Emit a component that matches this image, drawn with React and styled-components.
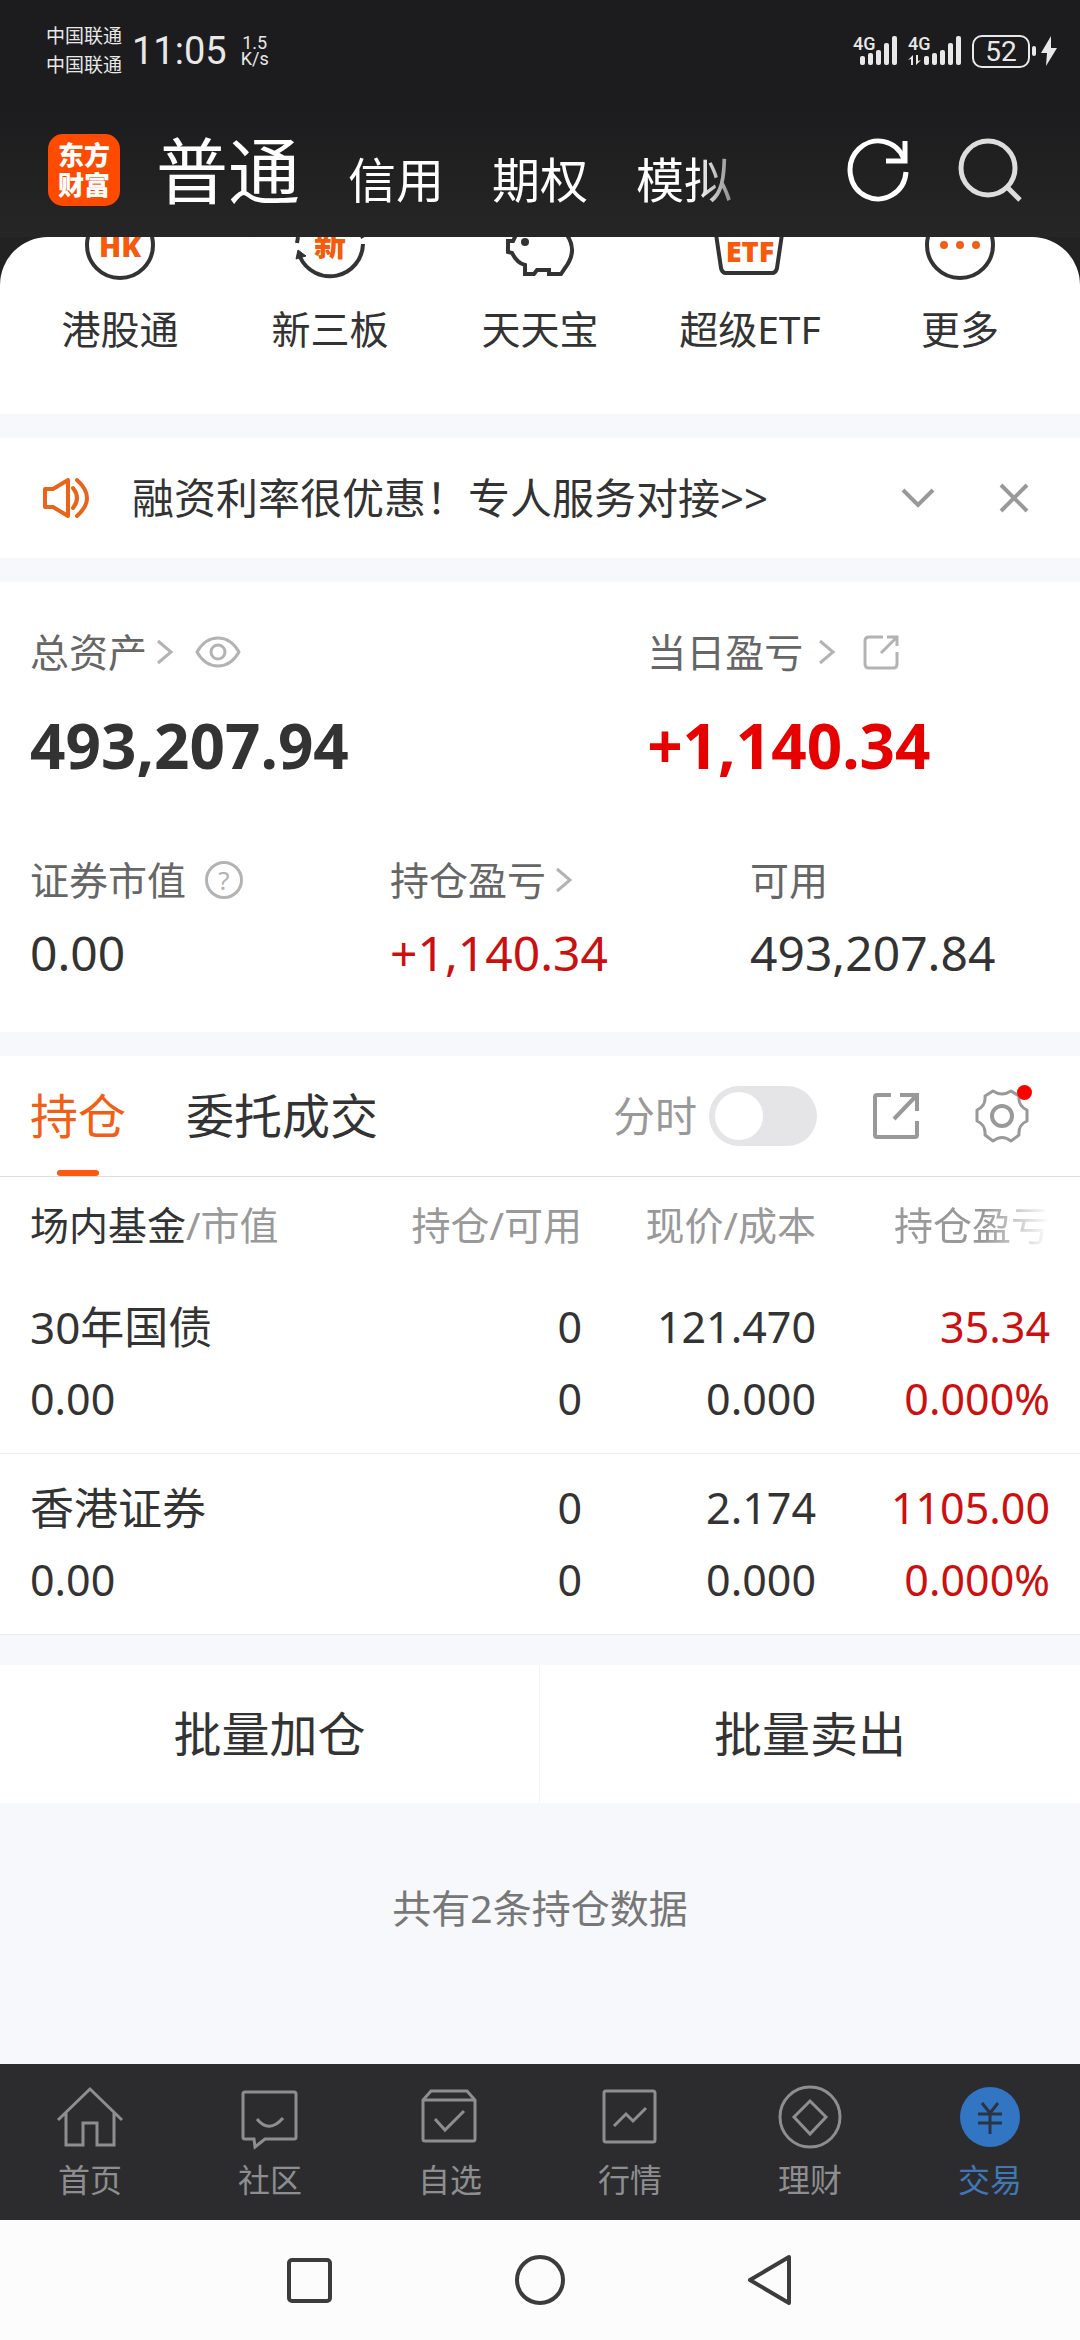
import styled, { createGlobalStyle } from 'styled-components';

const shortcuts = [
  { label: '港股通', icon: <HkIcon /> },
  { label: '新三板', icon: <NewBoardIcon /> },
  { label: '天天宝', icon: <PiggyIcon /> },
  { label: '超级ETF', icon: <EtfIcon /> },
  { label: '更多', icon: <MoreIcon /> },
];

const holdings = [
  {
    name: '30年国债',
    value: '0.00',
    amount: '0',
    available: '0',
    price: '121.470',
    cost: '0.000',
    profit: '35.34',
    rate: '0.000%',
  },
  {
    name: '香港证券',
    value: '0.00',
    amount: '0',
    available: '0',
    price: '2.174',
    cost: '0.000',
    profit: '1105.00',
    rate: '0.000%',
  },
];

const navItems = [
  { label: '首页', icon: <HomeIcon /> },
  { label: '社区', icon: <CommunityIcon /> },
  { label: '自选', icon: <WatchlistIcon /> },
  { label: '行情', icon: <QuotesIcon /> },
  { label: '理财', icon: <WealthIcon /> },
  { label: '交易', icon: <TradeIcon />, active: true },
];

export default function App() {
  return (
    <>
      <GlobalStyle />
      <Page>
        <Top>
          <StatusBar />
          <Header />
        </Top>
        <Main>
          <ShortcutsBackdrop>
            <Shortcuts>
              {shortcuts.map(({ label, icon }) => (
                <Shortcut key={label} href="#">
                  {icon}
                  {label}
                </Shortcut>
              ))}
            </Shortcuts>
          </ShortcutsBackdrop>
          <Notice />
          <Assets />
          <Positions />
          <BatchActions>
            <BatchButton type="button">批量加仓</BatchButton>
            <BatchButton type="button">批量卖出</BatchButton>
          </BatchActions>
          <Summary>共有2条持仓数据</Summary>
        </Main>
        <BottomNav>
          {navItems.map(({ label, icon, active }) => (
            <NavLink key={label} href="#" $active={active}>
              {icon}
              {label}
            </NavLink>
          ))}
        </BottomNav>
        <SystemNav />
      </Page>
    </>
  );
}

function StatusBar() {
  return (
    <StatusContainer>
      <Carriers>
        <span>中国联通</span>
        <span>中国联通</span>
      </Carriers>
      <Clock>11:05</Clock>
      <Speed>
        <span>1.5</span>
        <span>K/s</span>
      </Speed>
      <StatusIcons>
        <Signal />
        <Signal data />
        <Battery>
          <BatteryLevel>52</BatteryLevel>
          <BatteryTip />
        </Battery>
        <svg width="18" height="30" viewBox="0 0 18 30" fill="#e8e8e8">
          <path d="M11 0 1 17h6L6 30 17 12h-6z" />
        </svg>
      </StatusIcons>
    </StatusContainer>
  );
}

function Signal({ data }) {
  const start = data ? 16 : 7;

  return (
    <SignalIcon
      width={data ? 54 : 45}
      height="30"
      viewBox={data ? '0 0 54 30' : '0 0 45 30'}
    >
      <SignalText x="0" y="14">
        4G
      </SignalText>
      {data && <path d="M0 24 5 19v10H3v-6zM13 24 8 29V19h2v6z" />}
      {[9, 12, 15, 22, 29].map((height, index) => (
        <rect
          key={height}
          x={start + index * 8}
          y={29 - height}
          width="5"
          height={height}
          rx="2"
        />
      ))}
    </SignalIcon>
  );
}

function Header() {
  return (
    <HeaderContainer>
      <Logo>
        <span>东方</span>
        <span>财富</span>
      </Logo>
      <AccountTabs>
        <AccountTab type="button" $active>
          普通
        </AccountTab>
        <AccountTab type="button">信用</AccountTab>
        <AccountTab type="button">期权</AccountTab>
        <AccountTab type="button">模拟</AccountTab>
      </AccountTabs>
      <HeaderActions>
        <IconButton type="button" aria-label="刷新">
          <svg width="64" height="64" viewBox="0 0 64 64" fill="none" stroke="#fff" strokeWidth="5">
            <path d="M60 34A28 29 0 1 1 58 21" />
            <path d="M59 3v20H40" />
          </svg>
        </IconButton>
        <IconButton type="button" aria-label="搜索">
          <svg width="64" height="64" viewBox="0 0 64 64" fill="none" stroke="#ddd" strokeWidth="5">
            <circle cx="30" cy="30" r="27" />
            <path d="m48 48 14 14" />
          </svg>
        </IconButton>
      </HeaderActions>
    </HeaderContainer>
  );
}

function Notice() {
  return (
    <NoticeContainer>
      <svg width="48" height="42" viewBox="0 0 48 42" fill="none" stroke="#e8641b" strokeWidth="4">
        <path d="M3 12h8L26 3v36L11 30H3z" strokeLinejoin="round" />
        <path d="M31 11q8 10 0 20M35 3q20 18 0 36" strokeLinecap="round" />
      </svg>
      <NoticeText href="#">融资利率很优惠！专人服务对接&gt;&gt;</NoticeText>
      <NoticeActions>
        <IconButton type="button" aria-label="展开">
          <svg width="34" height="34" viewBox="0 0 34 34" fill="none" stroke="#999" strokeWidth="4">
            <path d="m2 9 15 15L32 9" />
          </svg>
        </IconButton>
        <IconButton type="button" aria-label="关闭">
          <svg width="30" height="30" viewBox="0 0 30 30" fill="none" stroke="#999" strokeWidth="4">
            <path d="m2 2 26 26M28 2 2 28" />
          </svg>
        </IconButton>
      </NoticeActions>
    </NoticeContainer>
  );
}

function Assets() {
  return (
    <AssetsContainer>
      <AssetRow $columns="4fr 3fr">
        <Asset>
          <AssetLabel>
            总资产
            <Chevron />
            <IconButton type="button" aria-label="隐藏金额">
              <svg width="46" height="32" viewBox="0 0 46 32" fill="none" stroke="#b3b3b3" strokeWidth="3">
                <path d="M2 16Q10 2 23 2t21 14q-8 14-21 14T2 16z" strokeLinejoin="round" />
                <circle cx="23" cy="16" r="7" />
              </svg>
            </IconButton>
          </AssetLabel>
          <AssetValue $large>493,207.94</AssetValue>
        </Asset>
        <Asset>
          <AssetLabel $wide>
            当日盈亏
            <Chevron />
            <IconButton type="button" aria-label="分享">
              <svg width="36" height="36" viewBox="0 0 36 36" fill="none" stroke="#b3b3b3" strokeWidth="3">
                <path d="M20 3H6Q2 3 2 7v23q0 4 4 4h24q4 0 4-4V18" />
                <path d="M24 3h10v9M33 4 18 19" />
              </svg>
            </IconButton>
          </AssetLabel>
          <AssetValue $large $up>
            +1,140.34
          </AssetValue>
        </Asset>
      </AssetRow>
      <AssetRow $columns="1fr 1fr 1fr">
        <Asset>
          <AssetLabel>
            证券市值
            <HelpButton type="button" aria-label="说明">
              ?
            </HelpButton>
          </AssetLabel>
          <AssetValue>0.00</AssetValue>
        </Asset>
        <Asset>
          <AssetLabel>
            持仓盈亏
            <Chevron />
          </AssetLabel>
          <AssetValue $up>+1,140.34</AssetValue>
        </Asset>
        <Asset>
          <AssetLabel>可用</AssetLabel>
          <AssetValue>493,207.84</AssetValue>
        </Asset>
      </AssetRow>
    </AssetsContainer>
  );
}

function Chevron() {
  return (
    <svg width="18" height="26" viewBox="0 0 18 26" fill="none" stroke="#b3b3b3" strokeWidth="3">
      <path d="m2 2 13 11L2 24" />
    </svg>
  );
}

function Positions() {
  return (
    <PositionsContainer>
      <Toolbar>
        <Tab type="button" $active>
          持仓
        </Tab>
        <Tab type="button">委托成交</Tab>
        <Tools>
          <ToggleLabel>
            分时
            <Toggle type="checkbox" />
          </ToggleLabel>
          <IconButton type="button" aria-label="分享持仓">
            <svg width="46" height="46" viewBox="0 0 46 46" fill="none" stroke="#999" strokeWidth="4">
              <path d="M18 2H4Q2 2 2 4v38q0 2 2 2h38q2 0 2-2V28" />
              <path d="M27 2h17v16M43 3 21 26" />
            </svg>
          </IconButton>
          <IconButton type="button" aria-label="设置">
            <svg width="54" height="54" viewBox="0 0 54 54" fill="none" stroke="#999" strokeWidth="3">
              <path
                d="M18 2Q27 8 36 2L44 7Q43 17 52 21V32Q43 36 44 46L36 52Q27 45 18 52L10 46Q11 36 2 32V21Q11 17 10 7Z"
                strokeLinejoin="round"
              />
              <circle cx="27" cy="27" r="10" strokeWidth="4" />
            </svg>
            <Badge />
          </IconButton>
        </Tools>
      </Toolbar>
      <Table>
        <colgroup>
          <col />
          <Col />
          <Col />
          <Col $last />
        </colgroup>
        <thead>
          <tr>
            <HeadCell>
              <Strong>场内基金</Strong>/市值
            </HeadCell>
            <HeadCell>持仓/可用</HeadCell>
            <HeadCell>现价/成本</HeadCell>
            <HeadCell>
              <Fade>持仓盈亏</Fade>
            </HeadCell>
          </tr>
        </thead>
        <tbody>
          {holdings.map((item) => (
            <tr key={item.name}>
              <Cell>
                <HoldingName>{item.name}</HoldingName>
                <div>{item.value}</div>
              </Cell>
              <Cell>
                <div>{item.amount}</div>
                <div>{item.available}</div>
              </Cell>
              <Cell>
                <div>{item.price}</div>
                <div>{item.cost}</div>
              </Cell>
              <Cell $up>
                <div>{item.profit}</div>
                <div>{item.rate}</div>
              </Cell>
            </tr>
          ))}
        </tbody>
      </Table>
    </PositionsContainer>
  );
}

function SystemNav() {
  return (
    <SystemContainer>
      <IconButton type="button" aria-label="最近任务">
        <SystemIcon viewBox="0 0 56 56">
          <rect x="8" y="8" width="41" height="41" rx="3" />
        </SystemIcon>
      </IconButton>
      <IconButton type="button" aria-label="主屏幕">
        <SystemIcon viewBox="0 0 56 56">
          <circle cx="28" cy="28" r="23" />
        </SystemIcon>
      </IconButton>
      <IconButton type="button" aria-label="返回">
        <SystemIcon viewBox="0 0 56 56">
          <path d="M7 28 46 5v46z" />
        </SystemIcon>
      </IconButton>
    </SystemContainer>
  );
}

/* The shortcut icons are scrolled half under the header */

function HkIcon() {
  return (
    <ShortcutIcon viewBox="0 0 72 44">
      <circle cx="36" cy="8" r="33" />
      <IconText x="36" y="20" $size={29}>
        HK
      </IconText>
    </ShortcutIcon>
  );
}

function NewBoardIcon() {
  return (
    <ShortcutIcon viewBox="0 0 72 44">
      <path d="M69 7A33 33 0 0 1 6 20M4 0 3 6M67-3 69 1" />
      <path d="m4 13 8 6-10 3z" fill="#333" strokeWidth="1" />
      <IconText x="36" y="19" $size={32}>
        新
      </IconText>
    </ShortcutIcon>
  );
}

function PiggyIcon() {
  return (
    <ShortcutIcon viewBox="0 0 72 44">
      <path d="m12-2-3 6H4v11l4 1q5 10 13 12v9h9l3-4h12v4h12l4-6Q74 14 63-2" />
      <circle cx="21" cy="5" r="4" fill="#333" stroke="none" />
    </ShortcutIcon>
  );
}

function EtfIcon() {
  return (
    <ShortcutIcon viewBox="0 0 72 44">
      <path d="m2-3 5 34q1 5 5 5h46q4 0 5-5l5-34" />
      <IconText x="36" y="25" $size={29}>
        ETF
      </IconText>
    </ShortcutIcon>
  );
}

function MoreIcon() {
  return (
    <ShortcutIcon viewBox="0 0 72 44">
      <circle cx="36" cy="8" r="33" />
      <g fill="#f25f14" stroke="none">
        <circle cx="20" cy="8" r="4" />
        <circle cx="36" cy="8" r="4" />
        <circle cx="52" cy="8" r="4" />
      </g>
    </ShortcutIcon>
  );
}

function HomeIcon() {
  return (
    <NavIcon viewBox="0 0 72 72">
      <path d="M4 39 36 8l32 31M12 32v32h17V42h14v22h17V32" />
    </NavIcon>
  );
}

function CommunityIcon() {
  return (
    <NavIcon viewBox="0 0 72 72">
      <path d="M11 11h49q2 0 2 2v43q0 2-2 2H31l-10 8-1-8h-9q-2 0-2-2V13q0-2 2-2zM23 38q12 15 26-1" />
    </NavIcon>
  );
}

function WatchlistIcon() {
  return (
    <NavIcon viewBox="0 0 72 72">
      <path d="M9 19v39q0 2 2 2h48q2 0 2-2V19l-8-9H17zh52M21 38l10 11 19-19" />
    </NavIcon>
  );
}

function QuotesIcon() {
  return (
    <NavIcon viewBox="0 0 72 72">
      <rect x="10" y="10" width="51" height="51" rx="2" />
      <path d="m20 45 12-12 7 7 13-13" />
    </NavIcon>
  );
}

function WealthIcon() {
  return (
    <NavIcon viewBox="0 0 72 72">
      <circle cx="36" cy="36" r="30" />
      <path d="m36 20 16 16-16 17-16-17z" />
    </NavIcon>
  );
}

function TradeIcon() {
  return (
    <NavIcon viewBox="0 0 72 72">
      <circle cx="36" cy="36" r="30" fill="#3275c2" stroke="none" />
      <path d="m28 22 8 10 8-10M36 32v21M24 33h24M24 42h24" stroke="#2a3442" />
    </NavIcon>
  );
}

const GlobalStyle = createGlobalStyle`
  *, *::before, *::after {
    box-sizing: border-box;
  }

  body {
    margin: 0;
    color: #333;
    font-family: 'Noto Sans', 'Noto Sans CJK SC', sans-serif;
    background: #f6f8fb;
  }

  button, input {
    margin: 0;
    font: inherit;
  }

  a {
    color: inherit;
    text-decoration: none;
  }

  svg {
    display: block;
    flex-shrink: 0;
  }
`;

const Page = styled.div`
  display: flex;
  flex-direction: column;
  min-height: 100vh;
`;

const Top = styled.header`
  background: linear-gradient(#1c1c1e 45%, #262626);
`;

const StatusContainer = styled.div`
  display: flex;
  align-items: center;
  height: 102px;
  padding: 0 22px 0 46px;
  color: #e8e8e8;
`;

const Carriers = styled.div`
  display: flex;
  flex-direction: column;
  font-size: 19px;
  line-height: 29px;
`;

const Clock = styled.time`
  margin-left: 10px;
  font-family: Roboto, sans-serif;
  font-size: 38px;
  line-height: 48px;
`;

const Speed = styled.div`
  display: flex;
  flex-direction: column;
  align-items: center;
  margin-left: 14px;
  font-family: Roboto, sans-serif;
  font-size: 18px;
  line-height: 16px;
`;

const StatusIcons = styled.div`
  display: flex;
  align-items: center;
  gap: 10px;
  margin-left: auto;
`;

const SignalIcon = styled.svg`
  overflow: visible;
  fill: #e8e8e8;
`;

const SignalText = styled.text`
  font-family: Roboto, sans-serif;
  font-size: 18px;
  font-weight: 500;
`;

const Battery = styled.div`
  display: flex;
  align-items: center;
  gap: 2px;
  margin-right: -6px;
`;

const BatteryLevel = styled.span`
  width: 58px;
  border: 2px solid #e8e8e8;
  border-radius: 10px;
  font-family: Roboto, sans-serif;
  font-size: 28px;
  line-height: 29px;
  text-align: center;
`;

const BatteryTip = styled.span`
  width: 4px;
  height: 10px;
  border-radius: 2px;
  background: #e8e8e8;
`;

const HeaderContainer = styled.div`
  display: flex;
  align-items: center;
  height: 135px;
  padding: 0 58px 0 48px;
`;

const Logo = styled.div`
  display: flex;
  flex-direction: column;
  align-items: center;
  justify-content: center;
  width: 72px;
  height: 72px;
  border-radius: 15px;
  color: #fff;
  font-size: 26px;
  font-weight: 900;
  line-height: 30px;
  background: #ff4b00;
`;

const AccountTabs = styled.nav`
  display: flex;
  flex: 1;
  align-items: flex-end;
  gap: 48px;
  margin-left: 36px;
  overflow: hidden;
  mask-image: linear-gradient(to right, #000 540px, transparent 610px);
`;

const AccountTab = styled.button`
  flex-shrink: 0;
  padding: 0;
  border: 0;
  color: #fff;
  font-size: ${({ $active }) => ($active ? '72px' : '48px')};
  line-height: ${({ $active }) => ($active ? '100px' : '80px')};
  background: none;
`;

const HeaderActions = styled.div`
  display: flex;
  gap: 48px;
`;

const IconButton = styled.button`
  position: relative;
  display: flex;
  padding: 0;
  border: 0;
  background: none;
`;

const Main = styled.main`
  flex: 1;
`;

const ShortcutsBackdrop = styled.div`
  background: #222;
`;

const Shortcuts = styled.nav`
  display: grid;
  grid-template-columns: repeat(5, 1fr);
  padding: 0 15px 57px;
  border-radius: 48px 48px 0 0;
  background: #fff;
`;

const Shortcut = styled.a`
  display: flex;
  flex-direction: column;
  align-items: center;
  gap: 20px;
  font-size: 39px;
  line-height: 56px;
`;

const ShortcutIcon = styled.svg`
  width: 72px;
  height: 44px;
  fill: none;
  stroke: #333;
  stroke-width: 4px;
`;

const IconText = styled.text`
  fill: #f65a0b;
  stroke: none;
  font-size: ${({ $size }) => $size}px;
  font-weight: 900;
  text-anchor: middle;
`;

const NoticeContainer = styled.section`
  display: flex;
  align-items: center;
  height: 120px;
  margin-top: 24px;
  padding: 0 51px 0 42px;
  background: #fff;
`;

const NoticeText = styled.a`
  margin-left: 42px;
  font-size: 42px;
  line-height: 60px;
`;

const NoticeActions = styled.div`
  display: flex;
  align-items: center;
  gap: 64px;
  margin-left: auto;
`;

const AssetsContainer = styled.section`
  display: grid;
  gap: 60px;
  margin-top: 24px;
  padding: 40px 0 44px;
  background: #fff;
`;

const AssetRow = styled.div`
  display: grid;
  grid-template-columns: ${({ $columns }) => $columns};
`;

const Asset = styled.div`
  padding-left: 30px;
`;

const AssetLabel = styled.div`
  display: flex;
  align-items: center;
  gap: ${({ $wide }) => ($wide ? '15px' : '9px')};
  color: #666;
  font-size: 39px;
  line-height: 60px;

  ${IconButton} {
    margin-left: 12px;
  }
`;

const HelpButton = styled.button`
  width: 38px;
  height: 38px;
  margin-left: 10px;
  padding: 0;
  border: 3px solid #b3b3b3;
  border-radius: 50%;
  color: #b3b3b3;
  font-size: 26px;
  line-height: 30px;
  background: none;
`;

const AssetValue = styled.div`
  margin-top: ${({ $large }) => ($large ? '18px' : '8px')};
  color: ${({ $up, $large }) => {
    if (!$up) {
      return '#333';
    }

    return $large ? '#e60000' : '#cc0f0f';
  }};
  font-size: ${({ $large }) => ($large ? '62px' : '48px')};
  font-weight: ${({ $large }) => ($large ? 700 : 400)};
  line-height: ${({ $large }) => ($large ? '90px' : '70px')};
`;

const PositionsContainer = styled.section`
  margin-top: 24px;
  background: #fff;
`;

const Toolbar = styled.div`
  display: flex;
  align-items: center;
  gap: 60px;
  height: 121px;
  padding: 0 51px 0 30px;
  border-bottom: 1px solid #ddd;
`;

const Tab = styled.button`
  position: relative;
  align-self: stretch;
  padding: 0;
  border: 0;
  color: ${({ $active }) => ($active ? '#f25f14' : '#333')};
  font-size: 48px;
  line-height: 60px;
  background: none;

  &::after {
    content: '';
    position: absolute;
    bottom: 0;
    left: 50%;
    display: ${({ $active }) => ($active ? 'block' : 'none')};
    width: 42px;
    height: 6px;
    margin-left: -21px;
    border-radius: 3px;
    background: #ff5a0a;
  }
`;

const Tools = styled.div`
  display: flex;
  align-items: center;
  gap: 56px;
  margin-left: auto;
`;

const ToggleLabel = styled.label`
  display: flex;
  align-items: center;
  gap: 12px;
  color: #999;
  font-size: 42px;
  line-height: 60px;
`;

const Toggle = styled.input`
  width: 108px;
  height: 60px;
  padding: 6px;
  border-radius: 30px;
  background: #e5e5e7;
  appearance: none;

  &::before {
    content: '';
    display: block;
    width: 48px;
    height: 48px;
    border-radius: 50%;
    background: #fff;
  }

  &:checked::before {
    margin-left: auto;
  }
`;

const Badge = styled.span`
  position: absolute;
  top: -4px;
  right: -3px;
  width: 15px;
  height: 15px;
  border-radius: 50%;
  background: #f00;
`;

const Table = styled.table`
  width: 100%;
  border-collapse: separate;
  border-spacing: 0;
  table-layout: fixed;
`;

const Col = styled.col`
  width: ${({ $last }) => ($last ? '264px' : '234px')};
`;

const HeadCell = styled.th`
  height: 96px;
  padding: 0;
  color: #999;
  font-size: 39px;
  font-weight: 400;
  line-height: 56px;
  text-align: right;

  &:first-child {
    padding-left: 30px;
    text-align: left;
  }

  &:last-child {
    padding-right: 30px;
  }
`;

const Strong = styled.span`
  color: #333;
`;

const Fade = styled.span`
  mask-image: linear-gradient(to right, #000 58%, transparent);
`;

const Cell = styled.td`
  padding: 18px 0;
  border-bottom: 1px solid #ebebeb;
  color: ${({ $up }) => ($up ? '#cc0f0f' : '#333')};
  font-size: 43px;
  line-height: 72px;
  text-align: right;

  &:first-child {
    padding-left: 30px;
    text-align: left;
  }

  &:last-child {
    padding-right: 30px;
  }
`;

const HoldingName = styled.div`
  font-size: 44px;
`;

const BatchActions = styled.div`
  display: grid;
  grid-template-columns: 1fr 1fr;
  margin-top: 30px;
  background: #fff;
`;

const BatchButton = styled.button`
  height: 138px;
  padding: 0;
  border: 0;
  color: #333;
  font-size: 48px;
  line-height: 60px;
  background: none;

  &:first-child {
    border-right: 1px solid #f4f4f6;
  }
`;

const Summary = styled.p`
  margin: 0;
  padding: 75px 0;
  color: #777;
  font-size: 39px;
  line-height: 60px;
  text-align: center;
`;

const BottomNav = styled.nav`
  display: grid;
  grid-template-columns: repeat(6, 1fr);
  height: 156px;
  padding-top: 17px;
  background: #2c2c2e;
`;

const NavLink = styled.a`
  display: flex;
  flex-direction: column;
  align-items: center;
  gap: 3px;
  color: ${({ $active }) => ($active ? '#3f78b8' : '#8e8e91')};
  font-size: 32px;
  line-height: 48px;
`;

const NavIcon = styled.svg`
  width: 72px;
  height: 72px;
  fill: none;
  stroke: #8e8e91;
  stroke-width: 3px;
`;

const SystemContainer = styled.nav`
  display: flex;
  align-items: center;
  justify-content: center;
  gap: 175px;
  height: 120px;
  background: #fcfcfc;
`;

const SystemIcon = styled.svg`
  width: 56px;
  height: 56px;
  fill: none;
  stroke: #3c3c3c;
  stroke-width: 4px;
  stroke-linejoin: round;
`;
